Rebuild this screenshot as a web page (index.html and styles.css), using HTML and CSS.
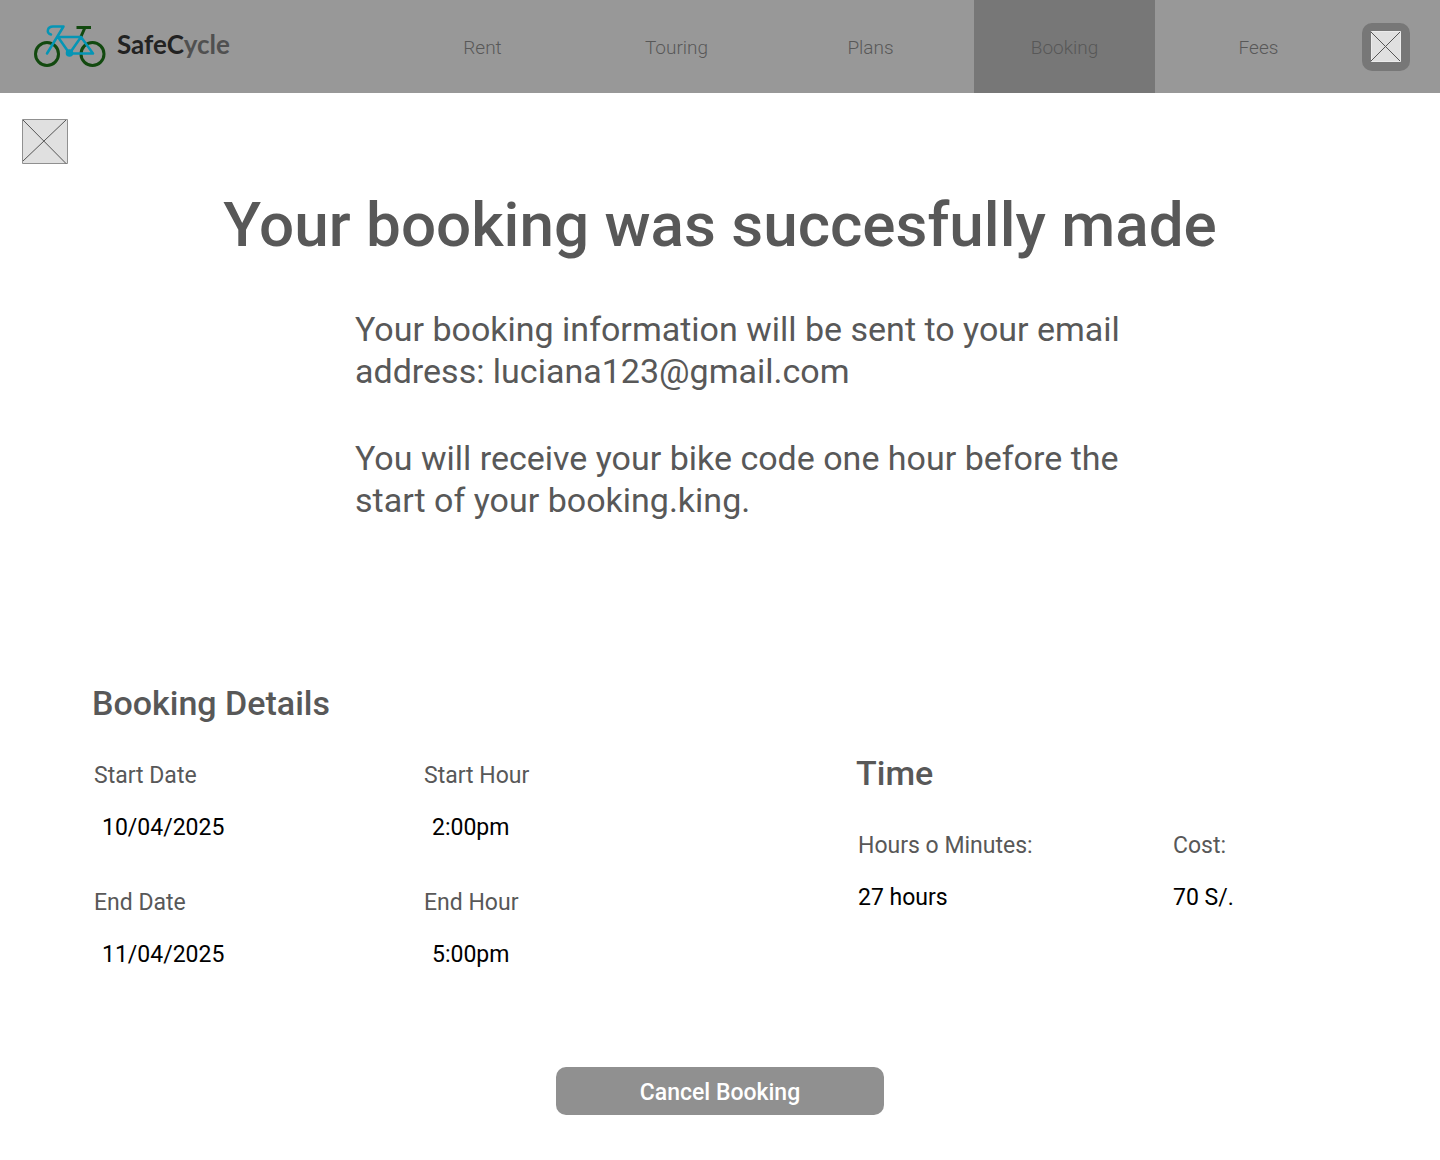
FILE: index.html
```html
<!DOCTYPE html>
<html lang="en">
<head>
<meta charset="utf-8">
<meta name="viewport" content="width=device-width, initial-scale=1">
<title>SafeCycle – Booking</title>
<link rel="stylesheet" href="styles.css">
</head>
<body>
<header class="site-header">
  <a class="brand" href="#">
    <svg class="brand-bike" viewBox="0 0 72 44" aria-hidden="true">
      <g fill="none" stroke="#12490f" stroke-width="3">
        <circle cx="13" cy="29" r="11.500"/>
        <circle cx="58.500" cy="29" r="11.500"/>
        <path d="M42.500 2.500H57M51 2.500l-4 9"/>
      </g>
      <g fill="none" stroke="#0595b5" stroke-width="2.500" stroke-linecap="round" stroke-linejoin="round">
        <path d="M17 9.500c-5-1-4-8 2-8H29.500L13 28.500M24 12 35.500 28.500M24 12h23L35.500 28.500H59L47 12"/>
      </g>
      <circle cx="35.500" cy="28" r="3.800" fill="#0595b5"/>
    </svg>
    <span class="brand-name">SafeC<span class="brand-tail">ycle</span></span>
  </a>
  <nav class="site-nav" aria-label="Main">
    <a class="nav-link" href="#">Rent</a>
    <a class="nav-link" href="#">Touring</a>
    <a class="nav-link" href="#">Plans</a>
    <a class="nav-link nav-link-current" href="#" aria-current="page">Booking</a>
    <a class="nav-link" href="#">Fees</a>
  </nav>
  <button class="account-button" type="button" aria-label="Account">
    <svg class="account-icon" viewBox="0 0 30 31" aria-hidden="true">
      <path fill="#e0e0e0" stroke="#ececec" d="M.5.500h29v30H.500Z"/>
      <path stroke="#555" d="m0 1 29 29M29 1 0 30"/>
    </svg>
  </button>
</header>
<main class="page">
  <button class="back-button" type="button" aria-label="Back">
    <svg class="back-icon" viewBox="0 0 46 45" aria-hidden="true">
      <path fill="#e0e0e0" stroke="#909090" d="M.5.500h45v44H.500Z"/>
      <path stroke="#555" d="m1 1 43 43.500M44 1 1 42"/>
    </svg>
  </button>
  <h1 class="title">Your booking was succesfully made</h1>
  <div class="message">
    <p class="message-text">Your booking information will be sent to your email<br>address: luciana123@gmail.com</p>
    <p class="message-text">You will receive your bike code one hour before the<br>start of your booking.king.</p>
  </div>
  <div class="summary">
    <section class="booking">
      <h2 class="section-title">Booking Details</h2>
      <dl class="fields booking-fields">
        <div><dt>Start Date</dt><dd class="inset">10/04/2025</dd></div>
        <div><dt>Start Hour</dt><dd class="inset">2:00pm</dd></div>
        <div><dt>End Date</dt><dd class="inset">11/04/2025</dd></div>
        <div><dt>End Hour</dt><dd class="inset">5:00pm</dd></div>
      </dl>
    </section>
    <section class="time">
      <h2 class="section-title">Time</h2>
      <dl class="fields time-fields">
        <div><dt>Hours o Minutes:</dt><dd>27 hours</dd></div>
        <div><dt>Cost:</dt><dd>70 S/.</dd></div>
      </dl>
    </section>
  </div>
  <button class="cancel-button" type="button">Cancel Booking</button>
</main>
</body>
</html>
```
FILE: styles.css
```css
* {
  box-sizing: border-box;
}

body {
  margin: 0;
  background: #fff;
  color: #585858;
  font-family: Roboto, "Liberation Sans", sans-serif;
}

h1, h2, p, dl, dd {
  margin: 0;
}

button {
  border: 0;
  padding: 0;
  font-family: inherit;
  cursor: pointer;
}

svg {
  display: block;
}

.site-header {
  display: flex;
  align-items: center;
  gap: 13px;
  min-height: 93px;
  padding: 0 30px 0 34px;
  background: #989898;
}

.brand {
  display: flex;
  align-items: flex-start;
  gap: 11px;
  margin-right: auto;
  text-decoration: none;
}

.brand-bike {
  width: 72px;
  height: 44px;
}

.brand-name {
  color: #222;
  font: 700 26px/38px Lato, sans-serif;
}

.brand-tail {
  color: #505050;
}

.site-nav {
  display: flex;
  align-self: stretch;
  gap: 13px;
}

.nav-link {
  display: flex;
  align-items: center;
  justify-content: center;
  width: 181px;
  padding-top: 2px;
  color: #585858;
  font-size: 19px;
  font-weight: 300;
  text-decoration: none;
}

.nav-link-current {
  background: #777;
}

.account-button {
  display: grid;
  place-items: center;
  width: 48px;
  height: 48px;
  border-radius: 10px;
  background: #777;
}

.account-icon {
  width: 30px;
  height: 31px;
}

.page {
  display: flex;
  flex-direction: column;
  padding: 26px 22px 45px;
}

.back-button {
  align-self: flex-start;
  background: none;
}

.back-icon {
  width: 46px;
  height: 45px;
}

.title {
  margin-top: 23px;
  font-size: 62px;
  font-weight: 500;
  line-height: 76px;
  text-align: center;
}

.message {
  display: grid;
  gap: 45px;
  width: 772px;
  max-width: 100%;
  margin: 45px auto 0;
  padding-left: 42px;
  box-sizing: content-box;
}

.message-text {
  font-size: 34px;
  line-height: 42px;
  white-space: nowrap;
}

.summary {
  display: grid;
  grid-template-columns: 764fr 492fr;
  margin-top: 160px;
  padding: 0 70px;
}

.time {
  padding-top: 70px;
}

.section-title {
  font-size: 34px;
  font-weight: 500;
  line-height: 44px;
}

.fields {
  display: grid;
  row-gap: 47px;
  margin-top: 37px;
  padding-left: 2px;
  font-size: 23px;
  line-height: 28px;
}

.booking-fields {
  grid-template-columns: 330fr 432fr;
}

.time-fields {
  grid-template-columns: 315fr 175fr;
}

.fields dd {
  margin-top: 24px;
  color: #000;
}

.fields .inset {
  padding-left: 8px;
}

.cancel-button {
  align-self: center;
  width: 328px;
  height: 48px;
  margin-top: 98px;
  padding-top: 2px;
  border-radius: 10px;
  background: #909090;
  color: #fff;
  font-size: 23px;
  font-weight: 500;
}
```
